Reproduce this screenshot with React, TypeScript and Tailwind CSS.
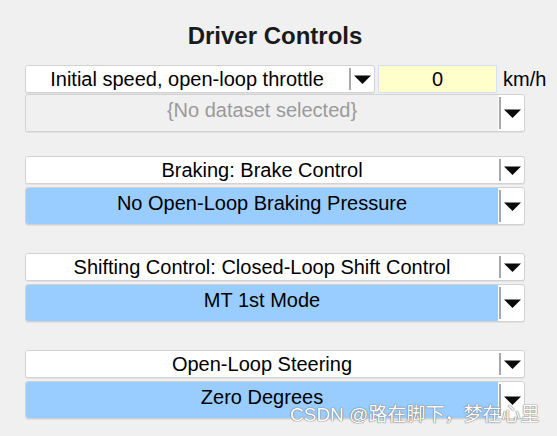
import React from 'react';

type Fill = 'white' | 'blue' | 'disabled';

const fillClass: Record<Fill, string> = {
  white: 'bg-white text-black',
  blue: 'bg-[#99ccff] text-black',
  disabled: 'bg-[#f0f0f0] text-[#9a9a9a]',
};

function Arrow() {
  return (
    <svg width="17" height="9" viewBox="0 0 17 9" className="block">
      <polygon points="0,0.5 17,0.5 8.5,9" fill="#0a0a0a" />
    </svg>
  );
}

function Dropdown({
  label,
  fill = 'white',
  tall = false,
  className = '',
}: {
  label: string;
  fill?: Fill;
  tall?: boolean;
  className?: string;
}) {
  return (
    <div
      className={`flex shrink-0 rounded-[3px] border border-[#d2d2d2] bg-white shadow-[0_1px_0_#e2e2e2] overflow-hidden ${
        fill === 'disabled' ? 'bg-[#f0f0f0]' : ''
      } ${tall ? 'h-[38px]' : 'h-[28px]'} ${className}`}
    >
      <div
        className={`flex-1 flex justify-center leading-[28px] whitespace-nowrap ${
          tall ? 'items-start pt-[1px]' : 'items-center'
        } ${fillClass[fill]}`}
      >
        {label}
      </div>
      <div className="w-[1px]" />
      <div className="w-[2px] my-[2px] bg-[#a8a8a8]" />
      <div className="w-[23px] flex items-center justify-center">
        <Arrow />
      </div>
    </div>
  );
}

function Group({ top, bottom }: { top: string; bottom: string }) {
  return (
    <div className="flex flex-col gap-[3px]">
      <Dropdown label={top} />
      <Dropdown label={bottom} fill="blue" tall />
    </div>
  );
}

export default function App() {
  return (
    <div
      className="relative w-[557px] h-[436px] bg-[#f0f0f0] text-[20px] text-black overflow-hidden"
      style={{ fontFamily: '"Liberation Sans", Arial, sans-serif' }}
    >
      <div className="w-[500px] ml-[25px]">
        <h1 className="pt-[22px] h-[50px] text-center text-[24px] leading-[28px] font-bold text-[#1a1a1a] mb-[15px]">
          Driver Controls
        </h1>

        <div className="flex flex-col gap-[1px]">
          <div className="flex items-center">
            <Dropdown label="Initial speed, open-loop throttle" className="w-[350px]" />
            <div className="shrink-0 ml-[3px] w-[119px] h-[28px] flex items-center justify-center bg-[#ffffcc] border border-[#cfe3f5]">
              0
            </div>
            <span className="shrink-0 ml-[6px] leading-[28px] whitespace-nowrap">km/h</span>
          </div>
          <Dropdown label="{No dataset selected}" fill="disabled" tall />
        </div>

        <div className="flex flex-col gap-[28px] mt-[24px]">
          <Group top="Braking: Brake Control" bottom="No Open-Loop Braking Pressure" />
          <Group top="Shifting Control: Closed-Loop Shift Control" bottom="MT 1st Mode" />
          <Group top="Open-Loop Steering" bottom="Zero Degrees" />
        </div>
      </div>

      <div
        className="absolute left-[290px] top-[404px] text-[19px] leading-[22px] text-white whitespace-nowrap [text-shadow:0_0_1px_#7a7a7a,0_0_1px_#7a7a7a,0_0_1px_#7a7a7a]"
        style={{ fontFamily: '"Liberation Sans", "Noto Sans CJK SC", sans-serif' }}
      >
        CSDN @路在脚下，梦在心里
      </div>
    </div>
  );
}
